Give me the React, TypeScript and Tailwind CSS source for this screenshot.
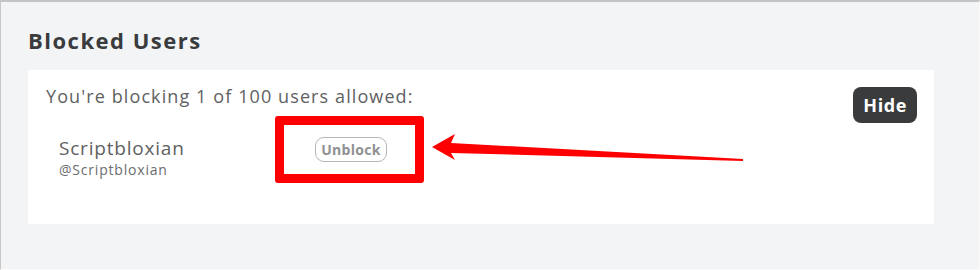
import React from "react";

export default function App() {
  return (
    <div
      className="relative w-[980px] h-[270px] bg-[#f2f4f5] border-t-2 border-l border-r border-b border-t-[#c4c4c4] border-l-[#c8c8c8] border-r-[#fafafa] border-b-[#fafafa] flex flex-col overflow-hidden"
      style={{ fontFamily: '"Open Sans", "Liberation Sans", sans-serif' }}
    >
      <h2 className="ml-[27px] mt-[24px] h-[28px] leading-[28px] text-[22px] font-bold text-[#393b3d] tracking-[1.5px]">
        Blocked Users
      </h2>
      <div className="ml-[27px] mt-[16px] w-[906px] h-[154px] bg-white flex flex-col">
        <div className="flex items-start justify-between pl-[18px] pr-[17px] pt-[13px]">
          <p className="text-[18px] leading-[26px] text-[#606162] tracking-[1.1px]">
            You're blocking 1 of 100 users allowed:
          </p>
          <button className="mt-[4px] h-[36px] px-[10px] rounded-[8px] bg-[#393b3d] text-white text-[18px] font-bold leading-[36px] tracking-[0.6px]">
            Hide
          </button>
        </div>
        <div className="flex items-start pl-[31px] mt-[13px]">
          <div className="w-[256px] flex flex-col">
            <span className="text-[19px] leading-[24px] text-[#606162] tracking-[0.8px]">Scriptbloxian</span>
            <span className="text-[14px] leading-[20px] text-[#6b6c6e] tracking-[0.8px]">@Scriptbloxian</span>
          </div>
          <button className="mt-[1px] h-[25px] w-[72px] rounded-[9px] border-[1.5px] border-[#b4b5b6] text-[14px] font-bold text-[#8f9092] leading-[22px] tracking-[0.3px]">
            Unblock
          </button>
        </div>
      </div>

      {/* annotation overlay */}
      <div className="absolute left-[274px] top-[114px] w-[149px] h-[67px] border-[9px] border-[#ff0000] rounded-[3px] pointer-events-none" />
      <svg
        className="absolute left-[-1px] top-[-2px] pointer-events-none"
        width="980"
        height="270"
        viewBox="0 0 980 270"
      >
        <polygon
          points="432,147 455,134 451,143 743,159 743,161 451,153 455,160"
          fill="#ff0000"
        />
      </svg>
    </div>
  );
}
